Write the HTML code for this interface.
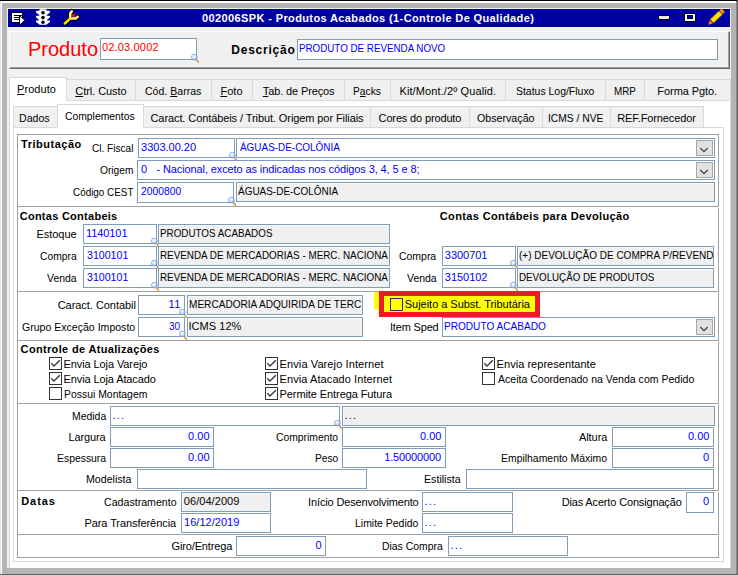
<!DOCTYPE html><html><head><meta charset="utf-8"><style>html,body{margin:0;padding:0;}body{width:738px;height:575px;position:relative;overflow:hidden;background:#b4b4b4;font-family:"Liberation Sans",sans-serif;}div,span,svg{position:absolute;}u{text-decoration:underline;text-underline-offset:1px}</style></head><body><svg style="left:0;top:0" width="0" height="0"><defs><radialGradient id="mg" cx="0.38" cy="0.35" r="0.75"><stop offset="0" stop-color="#ffffff"/><stop offset="0.45" stop-color="#d6e8fb"/><stop offset="1" stop-color="#6d9ae0"/></radialGradient></defs></svg><div style="left:0px;top:0px;width:738px;height:575px;background:#b4b4b4"></div><div style="left:0px;top:0px;width:738px;height:1px;background:#000"></div><div style="left:1px;top:1px;width:736px;height:2px;background:#fff"></div><div style="left:0px;top:1px;width:1px;height:573px;background:#e3e3e3"></div><div style="left:1px;top:1px;width:1px;height:573px;background:#fff"></div><div style="left:736px;top:1px;width:1px;height:574px;background:#8c8c8c"></div><div style="left:737px;top:0px;width:1px;height:575px;background:#646464"></div><div style="left:0px;top:574px;width:738px;height:1px;background:#646464"></div><div style="left:7px;top:8px;width:724px;height:560px;background:#f0f0f0"></div><div style="left:8px;top:9px;width:722px;height:18px;background:#0000a0"></div><span style="top:12px;font:bold 11px 'Liberation Sans',sans-serif;line-height:13px;color:#fff;white-space:nowrap;letter-spacing:0.380px;left:202.00px;">002006SPK - Produtos Acabados (1-Controle De Qualidade)</span><svg style="left:0;top:0" width="100" height="30" viewBox="0 0 100 30"><rect x="11" y="12" width="12" height="11" fill="#000"/><rect x="12" y="13" width="10" height="9" fill="#fff"/><rect x="14" y="15" width="8" height="1" fill="#000"/><rect x="14" y="17" width="6" height="1" fill="#000"/><rect x="14" y="19" width="6" height="1" fill="#000"/><path d="M19.5 15.8 L25.2 20.3 L19.5 25 Z" fill="#fff" stroke="#000" stroke-width="1" stroke-linejoin="miter"/><rect x="39.6" y="9.2" width="6.8" height="15.6" fill="#fff"/><path d="M35.8 11 L40 10.6 L40 15.6 L36.3 12.8 Z M35.8 16 L40 15.4 L40 20.4 L36.3 17.7 Z M35.8 20.6 L40 20.2 L40 24.8 L36.3 22.3 Z" fill="#fff"/><path d="M50.2 11 L46 10.6 L46 15.6 L49.7 12.8 Z M50.2 16 L46 15.4 L46 20.4 L49.7 17.7 Z M50.2 20.6 L46 20.2 L46 24.8 L49.7 22.3 Z" fill="#fff"/><circle cx="43" cy="12.8" r="1.8" fill="#000"/><circle cx="43" cy="17.6" r="1.8" fill="#000"/><circle cx="43" cy="22.3" r="1.8" fill="#000"/><path d="M71.8 11.2 L70.2 13.5 L70.2 18.5 L75.5 18.5 L77.8 16.8 M70.2 18.5 L64.8 23.5" fill="none" stroke="#000" stroke-width="4.6" stroke-linejoin="round" stroke-linecap="round"/><path d="M71.8 11.2 L70.2 13.5 L70.2 18.5 L75.5 18.5 L77.8 16.8" fill="none" stroke="#fff6a0" stroke-width="2.5" stroke-linejoin="round" stroke-linecap="round"/><path d="M70.2 18.5 L64.8 23.5" fill="none" stroke="#f0e000" stroke-width="2.5" stroke-linecap="round"/><rect x="72" y="14" width="3" height="3" fill="#ff0000"/></svg><div style="left:658px;top:15px;width:12px;height:5px;background:#000"></div><div style="left:659px;top:16px;width:10px;height:3px;background:#e8e8e8"></div><div style="left:684px;top:13px;width:12px;height:9px;background:#000"></div><div style="left:685px;top:14px;width:10px;height:7px;background:#fff"></div><div style="left:687px;top:15px;width:6px;height:4px;background:#000"></div><div style="left:688px;top:16px;width:4px;height:2px;background:#0000a0"></div><svg style="left:700px;top:6px" width="30" height="22" viewBox="700 6 30 22"><defs><linearGradient id="pgb" x1="0" y1="0" x2="0" y2="1"><stop offset="0" stop-color="#ffb000"/><stop offset="0.55" stop-color="#ffff00"/><stop offset="1" stop-color="#ff9000"/></linearGradient><linearGradient id="pgc" x1="0" y1="0" x2="0" y2="1"><stop offset="0" stop-color="#ffa000"/><stop offset="1" stop-color="#ff7000"/></linearGradient></defs><g transform="translate(708.2 24.7) rotate(-43.5)"><path d="M0 0 L4.4 -2.4 L4.4 2.4 Z" fill="#ff7800"/><rect x="5.1" y="-2.6" width="12" height="5.2" fill="url(#pgb)"/><rect x="17.7" y="-2.4" width="3.2" height="4.8" fill="url(#pgc)"/></g></svg><div style="left:9px;top:31px;width:721px;height:38px;background:#f0f0f0;border-top:1px solid #fff;border-left:1px solid #fff;border-right:1px solid #696969;border-bottom:1px solid #696969;box-shadow:inset -1px -1px 0 #a0a0a0;box-sizing:border-box"></div><span style="top:36px;font:21px 'Liberation Sans',sans-serif;line-height:25px;color:#ff0000;white-space:nowrap;transform:scaleX(0.9521);transform-origin:0 0;left:27.90px;">Produto</span><div style="left:100px;top:38px;width:97px;height:22px;background:#fff;border:1px solid #7f9db9;box-sizing:border-box"></div><span style="top:41px;font:11px 'Liberation Sans',sans-serif;line-height:13px;color:#ff0000;white-space:nowrap;letter-spacing:0.167px;left:102.00px;">02.03.0002</span><svg style="left:189px;top:52px" width="12" height="12" viewBox="189 52 12 12"><line x1="196.4" y1="59.6" x2="198.3" y2="62.1" stroke="#d29a3c" stroke-width="1.7" stroke-linecap="round"/><circle cx="194.4" cy="57.1" r="2.9" fill="url(#mg)" stroke="#6c93cf" stroke-width="0.7"/></svg><span style="top:43px;font:bold 12px 'Liberation Sans',sans-serif;line-height:14px;color:#000;white-space:nowrap;letter-spacing:0.762px;left:231.30px;">Descrição</span><div style="left:297px;top:39px;width:421px;height:21px;background:#fff;border:1px solid #7f9db9;box-sizing:border-box"></div><span style="top:42px;font:11px 'Liberation Sans',sans-serif;line-height:13px;color:#0000ff;white-space:nowrap;transform:scaleX(0.8902);transform-origin:0 0;left:298.81px;">PRODUTO DE REVENDA NOVO</span><div style="left:9px;top:100px;width:722px;height:468px;background:#fff;border:1px solid #d9d9d9;border-bottom:none;box-sizing:border-box"></div><div style="left:66px;top:79px;width:70px;height:22px;background:#f0f0f0;border:1px solid #d9d9d9;box-sizing:border-box"></div><div style="left:135px;top:79px;width:77px;height:22px;background:#f0f0f0;border:1px solid #d9d9d9;box-sizing:border-box"></div><div style="left:211px;top:79px;width:42px;height:22px;background:#f0f0f0;border:1px solid #d9d9d9;box-sizing:border-box"></div><div style="left:252px;top:79px;width:93px;height:22px;background:#f0f0f0;border:1px solid #d9d9d9;box-sizing:border-box"></div><div style="left:344px;top:79px;width:47px;height:22px;background:#f0f0f0;border:1px solid #d9d9d9;box-sizing:border-box"></div><div style="left:390px;top:79px;width:116px;height:22px;background:#f0f0f0;border:1px solid #d9d9d9;box-sizing:border-box"></div><div style="left:505px;top:79px;width:101px;height:22px;background:#f0f0f0;border:1px solid #d9d9d9;box-sizing:border-box"></div><div style="left:605px;top:79px;width:40px;height:22px;background:#f0f0f0;border:1px solid #d9d9d9;box-sizing:border-box"></div><div style="left:644px;top:79px;width:87px;height:22px;background:#f0f0f0;border:1px solid #d9d9d9;box-sizing:border-box"></div><div style="left:9px;top:77px;width:58px;height:24px;background:#fff;border:1px solid #d9d9d9;border-bottom:none;box-sizing:border-box"></div><div style="left:10px;top:100px;width:56px;height:1px;background:#fff"></div><span style="top:83px;font:11px 'Liberation Sans',sans-serif;line-height:13px;color:#000;white-space:nowrap;letter-spacing:0.067px;left:17.00px;"><u>P</u>roduto</span><span style="top:85px;font:11px 'Liberation Sans',sans-serif;line-height:13px;color:#000;white-space:nowrap;letter-spacing:-0.060px;left:75.30px;"><u>C</u>trl. Custo</span><span style="top:85px;font:11px 'Liberation Sans',sans-serif;line-height:13px;color:#000;white-space:nowrap;transform:scaleX(0.9593);transform-origin:0 0;left:145.20px;">Cód. <u>B</u>arras</span><span style="top:85px;font:11px 'Liberation Sans',sans-serif;line-height:13px;color:#000;white-space:nowrap;letter-spacing:0.067px;left:220.40px;"><u>F</u>oto</span><span style="top:85px;font:11px 'Liberation Sans',sans-serif;line-height:13px;color:#000;white-space:nowrap;letter-spacing:-0.131px;left:262.85px;"><u>T</u>ab. de Preços</span><span style="top:85px;font:11px 'Liberation Sans',sans-serif;line-height:13px;color:#000;white-space:nowrap;transform:scaleX(0.9345);transform-origin:0 0;left:353.02px;">P<u>a</u>cks</span><span style="top:85px;font:11px 'Liberation Sans',sans-serif;line-height:13px;color:#000;white-space:nowrap;letter-spacing:0.111px;left:399.45px;">Kit/Mont./2º Qualid.</span><span style="top:85px;font:11px 'Liberation Sans',sans-serif;line-height:13px;color:#000;white-space:nowrap;transform:scaleX(0.9500);transform-origin:0 0;left:516.07px;">Status Log/Fluxo</span><span style="top:85px;font:11px 'Liberation Sans',sans-serif;line-height:13px;color:#000;white-space:nowrap;transform:scaleX(0.8957);transform-origin:0 0;left:613.80px;">MRP</span><span style="top:85px;font:11px 'Liberation Sans',sans-serif;line-height:13px;color:#000;white-space:nowrap;letter-spacing:-0.070px;left:657.35px;">Forma Pgto.</span><div style="left:13px;top:127px;width:711px;height:435px;background:#fff;border:1px solid #d9d9d9;box-sizing:border-box"></div><div style="left:13px;top:106px;width:45px;height:22px;background:#f0f0f0;border:1px solid #d9d9d9;box-sizing:border-box"></div><div style="left:143px;top:106px;width:228px;height:22px;background:#f0f0f0;border:1px solid #d9d9d9;box-sizing:border-box"></div><div style="left:370px;top:106px;width:100px;height:22px;background:#f0f0f0;border:1px solid #d9d9d9;box-sizing:border-box"></div><div style="left:469px;top:106px;width:74px;height:22px;background:#f0f0f0;border:1px solid #d9d9d9;box-sizing:border-box"></div><div style="left:542px;top:106px;width:69px;height:22px;background:#f0f0f0;border:1px solid #d9d9d9;box-sizing:border-box"></div><div style="left:610px;top:106px;width:94px;height:22px;background:#f0f0f0;border:1px solid #d9d9d9;box-sizing:border-box"></div><div style="left:57px;top:104px;width:87px;height:24px;background:#fff;border:1px solid #d9d9d9;border-bottom:none;box-sizing:border-box"></div><span style="top:112px;font:11px 'Liberation Sans',sans-serif;line-height:13px;color:#000;white-space:nowrap;transform:scaleX(0.9613);transform-origin:0 0;left:18.74px;">Dados</span><span style="top:110px;font:11px 'Liberation Sans',sans-serif;line-height:13px;color:#000;white-space:nowrap;transform:scaleX(0.9405);transform-origin:0 0;left:64.90px;">Complementos</span><span style="top:112px;font:11px 'Liberation Sans',sans-serif;line-height:13px;color:#000;white-space:nowrap;letter-spacing:-0.089px;left:150.50px;">Caract. Contábeis / Tribut. Origem por Filiais</span><span style="top:112px;font:11px 'Liberation Sans',sans-serif;line-height:13px;color:#000;white-space:nowrap;letter-spacing:-0.147px;left:378.60px;">Cores do produto</span><span style="top:112px;font:11px 'Liberation Sans',sans-serif;line-height:13px;color:#000;white-space:nowrap;transform:scaleX(0.9695);transform-origin:0 0;left:477.40px;">Observação</span><span style="top:112px;font:11px 'Liberation Sans',sans-serif;line-height:13px;color:#000;white-space:nowrap;transform:scaleX(0.9345);transform-origin:0 0;left:548.47px;">ICMS / NVE</span><span style="top:112px;font:11px 'Liberation Sans',sans-serif;line-height:13px;color:#000;white-space:nowrap;letter-spacing:-0.115px;left:617.25px;">REF.Fornecedor</span><div style="left:17px;top:134px;width:702px;height:1px;background:#a0a0a0"></div><div style="left:17px;top:134px;width:1px;height:424px;background:#a0a0a0"></div><div style="left:718px;top:134px;width:1px;height:73px;background:#a0a0a0"></div><div style="left:718px;top:208px;width:1px;height:84px;background:#a0a0a0"></div><div style="left:718px;top:293px;width:1px;height:48px;background:#a0a0a0"></div><div style="left:718px;top:342px;width:1px;height:62px;background:#a0a0a0"></div><div style="left:718px;top:405px;width:1px;height:86px;background:#a0a0a0"></div><div style="left:718px;top:492px;width:1px;height:43px;background:#a0a0a0"></div><div style="left:718px;top:536px;width:1px;height:22px;background:#a0a0a0"></div><div style="left:17px;top:206px;width:702px;height:1px;background:#a0a0a0"></div><div style="left:17px;top:291px;width:702px;height:1px;background:#a0a0a0"></div><div style="left:17px;top:340px;width:702px;height:1px;background:#a0a0a0"></div><div style="left:17px;top:403px;width:702px;height:1px;background:#a0a0a0"></div><div style="left:17px;top:490px;width:702px;height:1px;background:#a0a0a0"></div><div style="left:17px;top:534px;width:702px;height:1px;background:#a0a0a0"></div><div style="left:17px;top:557px;width:702px;height:1px;background:#a0a0a0"></div><span style="top:138px;font:bold 11px 'Liberation Sans',sans-serif;line-height:13px;color:#000;white-space:nowrap;letter-spacing:0.511px;left:21.10px;">Tributação</span><span style="top:142px;font:11px 'Liberation Sans',sans-serif;line-height:13px;color:#000;white-space:nowrap;transform:scaleX(0.9156);transform-origin:0 0;left:92.00px;">Cl. Fiscal</span><div style="left:138px;top:138px;width:97px;height:20px;background:#fff;border:1px solid #7f9db9;box-sizing:border-box"></div><span style="top:141px;font:11px 'Liberation Sans',sans-serif;line-height:13px;color:#0000ff;white-space:nowrap;letter-spacing:-0.011px;left:141.10px;">3303.00.20</span><svg style="left:227px;top:150px" width="12" height="12" viewBox="227 150 12 12"><line x1="234.4" y1="157.6" x2="236.3" y2="160.1" stroke="#d29a3c" stroke-width="1.7" stroke-linecap="round"/><circle cx="232.4" cy="155.1" r="2.9" fill="url(#mg)" stroke="#6c93cf" stroke-width="0.7"/></svg><div style="left:236px;top:138px;width:479px;height:20px;background:#fff;border:1px solid #7f9db9;box-sizing:border-box"></div><div style="left:696px;top:140px;width:17px;height:16px;background:#e1e1e1;border:1px solid #a6a6a6;box-sizing:border-box"></div><svg style="left:696px;top:140px" width="17" height="16" viewBox="696 140 17 16"><polyline points="700.3,148 704,151.6 707.7,148" fill="none" stroke="#3a3a3a" stroke-width="1.15"/></svg><span style="top:141px;font:11px 'Liberation Sans',sans-serif;line-height:13px;color:#0000ff;white-space:nowrap;transform:scaleX(0.9027);transform-origin:0 0;left:239.70px;">ÁGUAS-DE-COLÔNIA</span><span style="top:164px;font:11px 'Liberation Sans',sans-serif;line-height:13px;color:#000;white-space:nowrap;transform:scaleX(0.9278);transform-origin:0 0;left:99.60px;">Origem</span><div style="left:137px;top:160px;width:578px;height:20px;background:#fff;border:1px solid #7f9db9;box-sizing:border-box"></div><div style="left:696px;top:162px;width:17px;height:16px;background:#e1e1e1;border:1px solid #a6a6a6;box-sizing:border-box"></div><svg style="left:696px;top:162px" width="17" height="16" viewBox="696 162 17 16"><polyline points="700.3,170 704,173.6 707.7,170" fill="none" stroke="#3a3a3a" stroke-width="1.15"/></svg><span style="top:163px;font:11px 'Liberation Sans',sans-serif;line-height:13px;color:#0000ff;white-space:nowrap;left:141.10px;">0</span><span style="top:163px;font:11px 'Liberation Sans',sans-serif;line-height:13px;color:#0000ff;white-space:nowrap;letter-spacing:-0.111px;left:156.50px;">- Nacional, exceto as indicadas nos códigos 3, 4, 5 e 8;</span><span style="top:186px;font:11px 'Liberation Sans',sans-serif;line-height:13px;color:#000;white-space:nowrap;transform:scaleX(0.8985);transform-origin:0 0;left:72.80px;">Código CEST</span><div style="left:137px;top:182px;width:97px;height:21px;background:#fff;border:1px solid #7f9db9;box-sizing:border-box"></div><span style="top:185px;font:11px 'Liberation Sans',sans-serif;line-height:13px;color:#0000ff;white-space:nowrap;transform:scaleX(0.9395);transform-origin:0 0;left:140.70px;">2000800</span><svg style="left:226px;top:195px" width="12" height="12" viewBox="226 195 12 12"><line x1="233.4" y1="202.6" x2="235.3" y2="205.1" stroke="#d29a3c" stroke-width="1.7" stroke-linecap="round"/><circle cx="231.4" cy="200.1" r="2.9" fill="url(#mg)" stroke="#6c93cf" stroke-width="0.7"/></svg><div style="left:236px;top:182px;width:479px;height:20px;background:#f0f0f0;border:1px solid #7f9db9;box-sizing:border-box;box-shadow:inset 1px 1px 0 #fbfbfb"></div><span style="top:185px;font:11px 'Liberation Sans',sans-serif;line-height:13px;color:#000;white-space:nowrap;transform:scaleX(0.9054);transform-origin:0 0;left:238.30px;">ÁGUAS-DE-COLÔNIA</span><span style="top:210px;font:bold 11px 'Liberation Sans',sans-serif;line-height:13px;color:#000;white-space:nowrap;letter-spacing:0.267px;left:19.70px;">Contas Contabeis</span><span style="top:228px;font:11px 'Liberation Sans',sans-serif;line-height:13px;color:#000;white-space:nowrap;letter-spacing:-0.050px;left:36.50px;">Estoque</span><div style="left:83px;top:224px;width:74px;height:20px;background:#fff;border:1px solid #7f9db9;box-sizing:border-box"></div><span style="top:227px;font:11px 'Liberation Sans',sans-serif;line-height:13px;color:#0000ff;white-space:nowrap;letter-spacing:-0.083px;left:86.00px;">1140101</span><svg style="left:149px;top:236px" width="12" height="12" viewBox="149 236 12 12"><line x1="156.4" y1="243.6" x2="158.3" y2="246.1" stroke="#d29a3c" stroke-width="1.7" stroke-linecap="round"/><circle cx="154.4" cy="241.1" r="2.9" fill="url(#mg)" stroke="#6c93cf" stroke-width="0.7"/></svg><div style="left:158px;top:224px;width:232px;height:20px;background:#f0f0f0;border:1px solid #7f9db9;box-sizing:border-box;box-shadow:inset 1px 1px 0 #fbfbfb"></div><div style="left:159px;top:225px;width:229px;height:18px;overflow:hidden"><span style="top:2px;font:11px 'Liberation Sans',sans-serif;line-height:13px;color:#000;white-space:nowrap;transform:scaleX(0.8944);transform-origin:0 0;left:0.71px;">PRODUTOS ACABADOS</span></div><span style="top:250px;font:11px 'Liberation Sans',sans-serif;line-height:13px;color:#000;white-space:nowrap;transform:scaleX(0.9359);transform-origin:0 0;left:39.70px;">Compra</span><div style="left:83px;top:246px;width:74px;height:20px;background:#fff;border:1px solid #7f9db9;box-sizing:border-box"></div><span style="top:249px;font:11px 'Liberation Sans',sans-serif;line-height:13px;color:#0000ff;white-space:nowrap;transform:scaleX(0.9643);transform-origin:0 0;left:87.00px;">3100101</span><svg style="left:149px;top:258px" width="12" height="12" viewBox="149 258 12 12"><line x1="156.4" y1="265.6" x2="158.3" y2="268.1" stroke="#d29a3c" stroke-width="1.7" stroke-linecap="round"/><circle cx="154.4" cy="263.1" r="2.9" fill="url(#mg)" stroke="#6c93cf" stroke-width="0.7"/></svg><div style="left:158px;top:246px;width:232px;height:20px;background:#f0f0f0;border:1px solid #7f9db9;box-sizing:border-box;box-shadow:inset 1px 1px 0 #fbfbfb"></div><div style="left:159px;top:247px;width:229px;height:18px;overflow:hidden"><span style="top:2px;font:11px 'Liberation Sans',sans-serif;line-height:13px;color:#000;white-space:nowrap;transform:scaleX(0.8963);transform-origin:0 0;left:1.00px;">REVENDA DE MERCADORIAS - MERC. NACIONAL</span></div><span style="top:272px;font:11px 'Liberation Sans',sans-serif;line-height:13px;color:#000;white-space:nowrap;transform:scaleX(0.9484);transform-origin:0 0;left:46.80px;">Venda</span><div style="left:83px;top:268px;width:74px;height:20px;background:#fff;border:1px solid #7f9db9;box-sizing:border-box"></div><span style="top:271px;font:11px 'Liberation Sans',sans-serif;line-height:13px;color:#0000ff;white-space:nowrap;transform:scaleX(0.9643);transform-origin:0 0;left:87.00px;">3100101</span><svg style="left:149px;top:280px" width="12" height="12" viewBox="149 280 12 12"><line x1="156.4" y1="287.6" x2="158.3" y2="290.1" stroke="#d29a3c" stroke-width="1.7" stroke-linecap="round"/><circle cx="154.4" cy="285.1" r="2.9" fill="url(#mg)" stroke="#6c93cf" stroke-width="0.7"/></svg><div style="left:158px;top:268px;width:232px;height:20px;background:#f0f0f0;border:1px solid #7f9db9;box-sizing:border-box;box-shadow:inset 1px 1px 0 #fbfbfb"></div><div style="left:159px;top:269px;width:229px;height:18px;overflow:hidden"><span style="top:2px;font:11px 'Liberation Sans',sans-serif;line-height:13px;color:#000;white-space:nowrap;transform:scaleX(0.8963);transform-origin:0 0;left:1.00px;">REVENDA DE MERCADORIAS - MERC. NACIONAL</span></div><span style="top:210px;font:bold 11px 'Liberation Sans',sans-serif;line-height:13px;color:#000;white-space:nowrap;letter-spacing:0.363px;left:439.80px;">Contas Contábeis para Devolução</span><span style="top:250px;font:11px 'Liberation Sans',sans-serif;line-height:13px;color:#000;white-space:nowrap;transform:scaleX(0.9500);transform-origin:0 0;left:399.15px;">Compra</span><div style="left:442px;top:246px;width:74px;height:20px;background:#fff;border:1px solid #7f9db9;box-sizing:border-box"></div><span style="top:249px;font:11px 'Liberation Sans',sans-serif;line-height:13px;color:#0000ff;white-space:nowrap;letter-spacing:-0.033px;left:444.80px;">3300701</span><svg style="left:508px;top:258px" width="12" height="12" viewBox="508 258 12 12"><line x1="515.4" y1="265.6" x2="517.3" y2="268.1" stroke="#d29a3c" stroke-width="1.7" stroke-linecap="round"/><circle cx="513.4" cy="263.1" r="2.9" fill="url(#mg)" stroke="#6c93cf" stroke-width="0.7"/></svg><div style="left:517px;top:246px;width:197px;height:20px;background:#f0f0f0;border:1px solid #7f9db9;box-sizing:border-box;box-shadow:inset 1px 1px 0 #fbfbfb"></div><div style="left:518px;top:247px;width:195px;height:18px;overflow:hidden"><span style="top:2px;font:11px 'Liberation Sans',sans-serif;line-height:13px;color:#000;white-space:nowrap;transform:scaleX(0.9080);transform-origin:0 0;left:0.69px;">(+) DEVOLUÇÃO DE COMPRA P/REVENDA</span></div><span style="top:272px;font:11px 'Liberation Sans',sans-serif;line-height:13px;color:#000;white-space:nowrap;transform:scaleX(0.9500);transform-origin:0 0;left:406.75px;">Venda</span><div style="left:442px;top:268px;width:74px;height:20px;background:#fff;border:1px solid #7f9db9;box-sizing:border-box"></div><span style="top:271px;font:11px 'Liberation Sans',sans-serif;line-height:13px;color:#0000ff;white-space:nowrap;letter-spacing:-0.033px;left:444.80px;">3150102</span><svg style="left:508px;top:280px" width="12" height="12" viewBox="508 280 12 12"><line x1="515.4" y1="287.6" x2="517.3" y2="290.1" stroke="#d29a3c" stroke-width="1.7" stroke-linecap="round"/><circle cx="513.4" cy="285.1" r="2.9" fill="url(#mg)" stroke="#6c93cf" stroke-width="0.7"/></svg><div style="left:517px;top:268px;width:197px;height:20px;background:#f0f0f0;border:1px solid #7f9db9;box-sizing:border-box;box-shadow:inset 1px 1px 0 #fbfbfb"></div><div style="left:518px;top:269px;width:195px;height:18px;overflow:hidden"><span style="top:2px;font:11px 'Liberation Sans',sans-serif;line-height:13px;color:#000;white-space:nowrap;transform:scaleX(0.8868);transform-origin:0 0;left:0.71px;">DEVOLUÇÃO DE PRODUTOS</span></div><span style="top:299px;font:11px 'Liberation Sans',sans-serif;line-height:13px;color:#000;white-space:nowrap;letter-spacing:-0.040px;left:57.70px;">Caract. Contabil</span><div style="left:138px;top:295px;width:47px;height:20px;background:#fff;border:1px solid #7f9db9;box-sizing:border-box"></div><span style="top:298px;font:11px 'Liberation Sans',sans-serif;line-height:13px;color:#0000ff;white-space:nowrap;letter-spacing:0.500px;left:168.50px;">11</span><svg style="left:177px;top:307px" width="12" height="12" viewBox="177 307 12 12"><line x1="184.4" y1="314.6" x2="186.3" y2="317.1" stroke="#d29a3c" stroke-width="1.7" stroke-linecap="round"/><circle cx="182.4" cy="312.1" r="2.9" fill="url(#mg)" stroke="#6c93cf" stroke-width="0.7"/></svg><div style="left:187px;top:295px;width:176px;height:20px;background:#f0f0f0;border:1px solid #7f9db9;box-sizing:border-box;box-shadow:inset 1px 1px 0 #fbfbfb"></div><div style="left:188px;top:296px;width:173px;height:18px;overflow:hidden"><span style="top:2px;font:11px 'Liberation Sans',sans-serif;line-height:13px;color:#000;white-space:nowrap;transform:scaleX(0.9162);transform-origin:0 0;left:1.08px;">MERCADORIA ADQUIRIDA DE TERCEIROS</span></div><span style="top:321px;font:11px 'Liberation Sans',sans-serif;line-height:13px;color:#000;white-space:nowrap;transform:scaleX(0.9593);transform-origin:0 0;left:21.90px;">Grupo Exceção Imposto</span><div style="left:138px;top:317px;width:47px;height:20px;background:#fff;border:1px solid #7f9db9;box-sizing:border-box"></div><span style="top:320px;font:11px 'Liberation Sans',sans-serif;line-height:13px;color:#0000ff;white-space:nowrap;transform:scaleX(0.9000);transform-origin:0 0;left:169.20px;">30</span><svg style="left:177px;top:329px" width="12" height="12" viewBox="177 329 12 12"><line x1="184.4" y1="336.6" x2="186.3" y2="339.1" stroke="#d29a3c" stroke-width="1.7" stroke-linecap="round"/><circle cx="182.4" cy="334.1" r="2.9" fill="url(#mg)" stroke="#6c93cf" stroke-width="0.7"/></svg><div style="left:187px;top:317px;width:176px;height:20px;background:#f0f0f0;border:1px solid #7f9db9;box-sizing:border-box;box-shadow:inset 1px 1px 0 #fbfbfb"></div><span style="top:320px;font:11px 'Liberation Sans',sans-serif;line-height:13px;color:#000;white-space:nowrap;letter-spacing:0.057px;left:188.40px;">ICMS 12%</span><div style="left:374px;top:292px;width:10px;height:17px;background:#ffff00"></div><div style="left:378px;top:292px;width:6px;height:22px;background:#ffff00"></div><div style="left:379px;top:291px;width:161px;height:26px;background:#ffff00;border:5px solid #ed1c24;box-sizing:border-box"></div><div style="left:390px;top:298px;width:13px;height:13px;background:#ffff00;border:1px solid #333;box-sizing:border-box"></div><span style="top:298px;font:11px 'Liberation Sans',sans-serif;line-height:13px;color:#000;white-space:nowrap;letter-spacing:-0.031px;left:404.80px;">Sujeito a Subst. Tributária</span><span style="top:321px;font:11px 'Liberation Sans',sans-serif;line-height:13px;color:#000;white-space:nowrap;letter-spacing:-0.162px;left:389.90px;">Item Sped</span><div style="left:442px;top:317px;width:273px;height:20px;background:#fff;border:1px solid #7f9db9;box-sizing:border-box"></div><div style="left:696px;top:319px;width:17px;height:16px;background:#e1e1e1;border:1px solid #a6a6a6;box-sizing:border-box"></div><svg style="left:696px;top:319px" width="17" height="16" viewBox="696 319 17 16"><polyline points="700.3,327 704,330.6 707.7,327" fill="none" stroke="#3a3a3a" stroke-width="1.15"/></svg><span style="top:320px;font:11px 'Liberation Sans',sans-serif;line-height:13px;color:#0000ff;white-space:nowrap;transform:scaleX(0.9164);transform-origin:0 0;left:444.48px;">PRODUTO ACABADO</span><span style="top:343px;font:bold 11px 'Liberation Sans',sans-serif;line-height:13px;color:#000;white-space:nowrap;letter-spacing:0.339px;left:20.60px;">Controle de Atualizações</span><div style="left:49px;top:357px;width:13px;height:13px;background:#fff;border:1px solid #333;box-sizing:border-box"></div><svg style="left:49px;top:357px" width="13" height="13" viewBox="0 0 13 13"><polyline points="2.3,6.3 5,9 10.8,3.3" fill="none" stroke="#333" stroke-width="1.3"/></svg><span style="top:358px;font:11px 'Liberation Sans',sans-serif;line-height:13px;color:#000;white-space:nowrap;letter-spacing:-0.100px;left:63.60px;">Envia Loja Varejo</span><div style="left:49px;top:372px;width:13px;height:13px;background:#fff;border:1px solid #333;box-sizing:border-box"></div><svg style="left:49px;top:372px" width="13" height="13" viewBox="0 0 13 13"><polyline points="2.3,6.3 5,9 10.8,3.3" fill="none" stroke="#333" stroke-width="1.3"/></svg><span style="top:373px;font:11px 'Liberation Sans',sans-serif;line-height:13px;color:#000;white-space:nowrap;letter-spacing:-0.112px;left:63.60px;">Envia Loja Atacado</span><div style="left:49px;top:387px;width:13px;height:13px;background:#fff;border:1px solid #333;box-sizing:border-box"></div><span style="top:388px;font:11px 'Liberation Sans',sans-serif;line-height:13px;color:#000;white-space:nowrap;transform:scaleX(0.9471);transform-origin:0 0;left:63.65px;">Possui Montagem</span><div style="left:265px;top:357px;width:13px;height:13px;background:#fff;border:1px solid #333;box-sizing:border-box"></div><svg style="left:265px;top:357px" width="13" height="13" viewBox="0 0 13 13"><polyline points="2.3,6.3 5,9 10.8,3.3" fill="none" stroke="#333" stroke-width="1.3"/></svg><span style="top:358px;font:11px 'Liberation Sans',sans-serif;line-height:13px;color:#000;white-space:nowrap;letter-spacing:0.100px;left:279.60px;">Envia Varejo Internet</span><div style="left:265px;top:372px;width:13px;height:13px;background:#fff;border:1px solid #333;box-sizing:border-box"></div><svg style="left:265px;top:372px" width="13" height="13" viewBox="0 0 13 13"><polyline points="2.3,6.3 5,9 10.8,3.3" fill="none" stroke="#333" stroke-width="1.3"/></svg><span style="top:373px;font:11px 'Liberation Sans',sans-serif;line-height:13px;color:#000;white-space:nowrap;letter-spacing:0.081px;left:279.60px;">Envia Atacado Internet</span><div style="left:265px;top:387px;width:13px;height:13px;background:#fff;border:1px solid #333;box-sizing:border-box"></div><svg style="left:265px;top:387px" width="13" height="13" viewBox="0 0 13 13"><polyline points="2.3,6.3 5,9 10.8,3.3" fill="none" stroke="#333" stroke-width="1.3"/></svg><span style="top:388px;font:11px 'Liberation Sans',sans-serif;line-height:13px;color:#000;white-space:nowrap;letter-spacing:-0.090px;left:279.60px;">Permite Entrega Futura</span><div style="left:482px;top:357px;width:13px;height:13px;background:#fff;border:1px solid #333;box-sizing:border-box"></div><svg style="left:482px;top:357px" width="13" height="13" viewBox="0 0 13 13"><polyline points="2.3,6.3 5,9 10.8,3.3" fill="none" stroke="#333" stroke-width="1.3"/></svg><span style="top:358px;font:11px 'Liberation Sans',sans-serif;line-height:13px;color:#000;white-space:nowrap;letter-spacing:0.039px;left:496.60px;">Envia representante</span><div style="left:482px;top:372px;width:13px;height:13px;background:#fff;border:1px solid #333;box-sizing:border-box"></div><span style="top:373px;font:11px 'Liberation Sans',sans-serif;line-height:13px;color:#000;white-space:nowrap;transform:scaleX(0.9580);transform-origin:0 0;left:497.60px;">Aceita Coordenado na Venda com Pedido</span><span style="top:410px;font:11px 'Liberation Sans',sans-serif;line-height:13px;color:#000;white-space:nowrap;transform:scaleX(0.9486);transform-origin:0 0;left:71.65px;">Medida</span><div style="left:110px;top:406px;width:230px;height:20px;background:#fff;border:1px solid #7f9db9;box-sizing:border-box"></div><span style="top:409px;font:11px 'Liberation Sans',sans-serif;line-height:13px;color:#0000ff;white-space:nowrap;letter-spacing:1.250px;left:112.50px;">...</span><svg style="left:332px;top:418px" width="12" height="12" viewBox="332 418 12 12"><line x1="339.4" y1="425.6" x2="341.3" y2="428.1" stroke="#d29a3c" stroke-width="1.7" stroke-linecap="round"/><circle cx="337.4" cy="423.1" r="2.9" fill="url(#mg)" stroke="#6c93cf" stroke-width="0.7"/></svg><div style="left:342px;top:406px;width:373px;height:20px;background:#f0f0f0;border:1px solid #7f9db9;box-sizing:border-box;box-shadow:inset 1px 1px 0 #fbfbfb"></div><span style="top:409px;font:11px 'Liberation Sans',sans-serif;line-height:13px;color:#000;white-space:nowrap;letter-spacing:1.250px;left:344.50px;">...</span><span style="top:431px;font:11px 'Liberation Sans',sans-serif;line-height:13px;color:#000;white-space:nowrap;letter-spacing:-0.100px;left:68.40px;">Largura</span><div style="left:110px;top:427px;width:104px;height:20px;background:#fff;border:1px solid #7f9db9;box-sizing:border-box"></div><span style="top:430px;font:11px 'Liberation Sans',sans-serif;line-height:13px;color:#0000ff;white-space:nowrap;letter-spacing:0.033px;left:188.10px;">0.00</span><span style="top:431px;font:11px 'Liberation Sans',sans-serif;line-height:13px;color:#000;white-space:nowrap;transform:scaleX(0.9409);transform-origin:0 0;left:275.70px;">Comprimento</span><div style="left:342px;top:427px;width:104px;height:20px;background:#fff;border:1px solid #7f9db9;box-sizing:border-box"></div><span style="top:430px;font:11px 'Liberation Sans',sans-serif;line-height:13px;color:#0000ff;white-space:nowrap;letter-spacing:0.033px;left:419.90px;">0.00</span><span style="top:431px;font:11px 'Liberation Sans',sans-serif;line-height:13px;color:#000;white-space:nowrap;letter-spacing:-0.080px;left:579.00px;">Altura</span><div style="left:612px;top:427px;width:102px;height:20px;background:#fff;border:1px solid #7f9db9;box-sizing:border-box"></div><span style="top:430px;font:11px 'Liberation Sans',sans-serif;line-height:13px;color:#0000ff;white-space:nowrap;letter-spacing:0.033px;left:687.90px;">0.00</span><span style="top:452px;font:11px 'Liberation Sans',sans-serif;line-height:13px;color:#000;white-space:nowrap;transform:scaleX(0.9451);transform-origin:0 0;left:56.65px;">Espessura</span><div style="left:110px;top:448px;width:104px;height:20px;background:#fff;border:1px solid #7f9db9;box-sizing:border-box"></div><span style="top:451px;font:11px 'Liberation Sans',sans-serif;line-height:13px;color:#0000ff;white-space:nowrap;letter-spacing:0.033px;left:188.10px;">0.00</span><span style="top:452px;font:11px 'Liberation Sans',sans-serif;line-height:13px;color:#000;white-space:nowrap;transform:scaleX(0.9250);transform-origin:0 0;left:314.68px;">Peso</span><div style="left:342px;top:448px;width:104px;height:20px;background:#fff;border:1px solid #7f9db9;box-sizing:border-box"></div><span style="top:451px;font:11px 'Liberation Sans',sans-serif;line-height:13px;color:#0000ff;white-space:nowrap;letter-spacing:-0.133px;left:384.20px;">1.50000000</span><span style="top:452px;font:11px 'Liberation Sans',sans-serif;line-height:13px;color:#000;white-space:nowrap;transform:scaleX(0.9477);transform-origin:0 0;left:501.45px;">Empilhamento Máximo</span><div style="left:612px;top:448px;width:102px;height:20px;background:#fff;border:1px solid #7f9db9;box-sizing:border-box"></div><span style="top:451px;font:11px 'Liberation Sans',sans-serif;line-height:13px;color:#0000ff;white-space:nowrap;left:703.00px;">0</span><span style="top:473px;font:11px 'Liberation Sans',sans-serif;line-height:13px;color:#000;white-space:nowrap;transform:scaleX(0.9652);transform-origin:0 0;left:86.43px;">Modelista</span><div style="left:137px;top:469px;width:230px;height:20px;background:#fff;border:1px solid #7f9db9;box-sizing:border-box"></div><span style="top:473px;font:11px 'Liberation Sans',sans-serif;line-height:13px;color:#000;white-space:nowrap;transform:scaleX(0.9676);transform-origin:0 0;left:424.33px;">Estilista</span><div style="left:466px;top:469px;width:248px;height:20px;background:#fff;border:1px solid #7f9db9;box-sizing:border-box"></div><span style="top:495px;font:bold 11px 'Liberation Sans',sans-serif;line-height:13px;color:#000;white-space:nowrap;letter-spacing:0.950px;left:21.20px;">Datas</span><span style="top:496px;font:11px 'Liberation Sans',sans-serif;line-height:13px;color:#000;white-space:nowrap;transform:scaleX(0.9653);transform-origin:0 0;left:103.80px;">Cadastramento</span><div style="left:181px;top:492px;width:90px;height:20px;background:#f0f0f0;border:1px solid #7f9db9;box-sizing:border-box;box-shadow:inset 1px 1px 0 #fbfbfb"></div><span style="top:495px;font:11px 'Liberation Sans',sans-serif;line-height:13px;color:#000;white-space:nowrap;letter-spacing:0.056px;left:183.80px;">06/04/2009</span><span style="top:517px;font:11px 'Liberation Sans',sans-serif;line-height:13px;color:#000;white-space:nowrap;letter-spacing:-0.071px;left:84.40px;">Para Transferência</span><div style="left:181px;top:513px;width:90px;height:20px;background:#fff;border:1px solid #7f9db9;box-sizing:border-box"></div><span style="top:516px;font:11px 'Liberation Sans',sans-serif;line-height:13px;color:#0000ff;white-space:nowrap;letter-spacing:0.022px;left:184.10px;">16/12/2019</span><span style="top:496px;font:11px 'Liberation Sans',sans-serif;line-height:13px;color:#000;white-space:nowrap;letter-spacing:-0.148px;left:308.10px;">Início Desenvolvimento</span><div style="left:422px;top:492px;width:91px;height:20px;background:#fff;border:1px solid #7f9db9;box-sizing:border-box"></div><span style="top:495px;font:11px 'Liberation Sans',sans-serif;line-height:13px;color:#0000ff;white-space:nowrap;letter-spacing:1.150px;left:424.60px;">...</span><span style="top:517px;font:11px 'Liberation Sans',sans-serif;line-height:13px;color:#000;white-space:nowrap;transform:scaleX(0.9508);transform-origin:0 0;left:355.25px;">Limite Pedido</span><div style="left:422px;top:513px;width:91px;height:20px;background:#fff;border:1px solid #7f9db9;box-sizing:border-box"></div><span style="top:516px;font:11px 'Liberation Sans',sans-serif;line-height:13px;color:#0000ff;white-space:nowrap;letter-spacing:1.150px;left:424.60px;">...</span><span style="top:496px;font:11px 'Liberation Sans',sans-serif;line-height:13px;color:#000;white-space:nowrap;letter-spacing:-0.155px;left:561.70px;">Dias Acerto Consignação</span><div style="left:686px;top:492px;width:28px;height:21px;background:#fff;border:1px solid #7f9db9;box-sizing:border-box"></div><span style="top:495px;font:11px 'Liberation Sans',sans-serif;line-height:13px;color:#0000ff;white-space:nowrap;left:703.00px;">0</span><span style="top:540px;font:11px 'Liberation Sans',sans-serif;line-height:13px;color:#000;white-space:nowrap;letter-spacing:-0.136px;left:171.50px;">Giro/Entrega</span><div style="left:236px;top:536px;width:90px;height:20px;background:#fff;border:1px solid #7f9db9;box-sizing:border-box"></div><span style="top:539px;font:11px 'Liberation Sans',sans-serif;line-height:13px;color:#0000ff;white-space:nowrap;left:315.50px;">0</span><span style="top:540px;font:11px 'Liberation Sans',sans-serif;line-height:13px;color:#000;white-space:nowrap;transform:scaleX(0.9460);transform-origin:0 0;left:382.45px;">Dias Compra</span><div style="left:448px;top:536px;width:120px;height:20px;background:#fff;border:1px solid #7f9db9;box-sizing:border-box"></div><span style="top:539px;font:11px 'Liberation Sans',sans-serif;line-height:13px;color:#0000ff;white-space:nowrap;letter-spacing:1.250px;left:450.50px;">...</span></body></html>
